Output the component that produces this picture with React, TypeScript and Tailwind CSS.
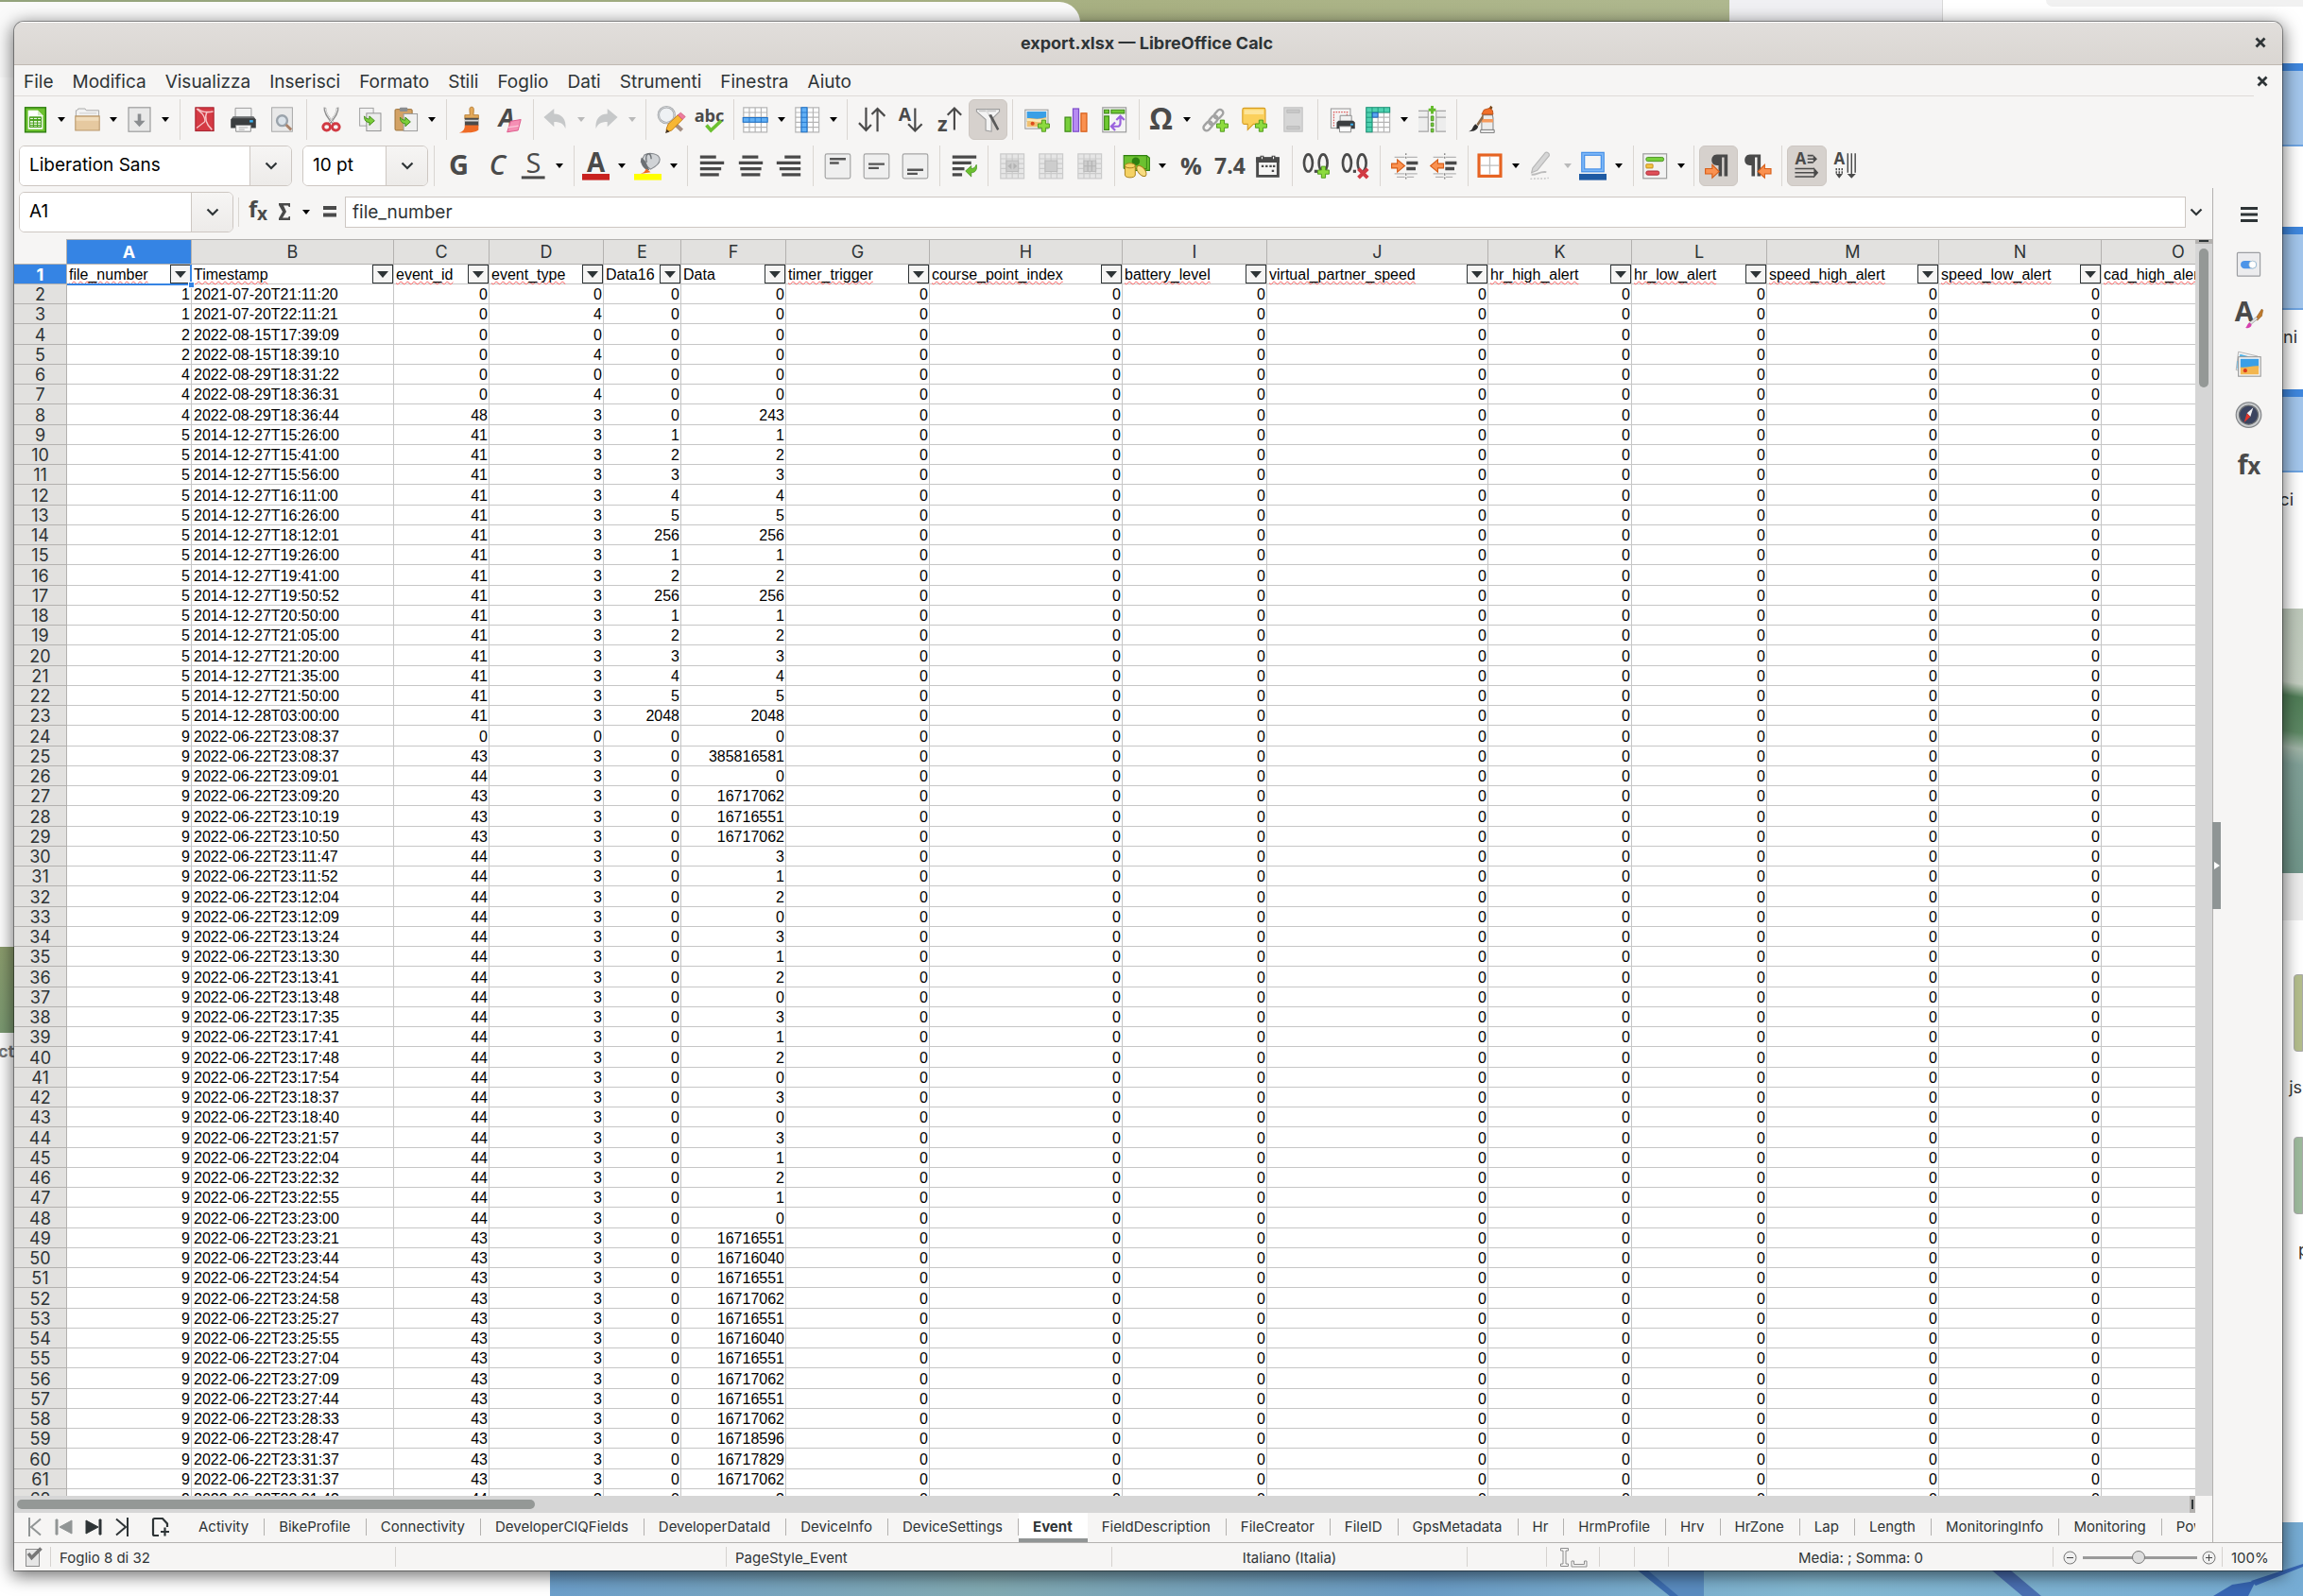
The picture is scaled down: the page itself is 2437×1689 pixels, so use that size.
import type { ReactNode } from "react";

/* ---------- data ---------- */

const columns = [
  { letter: "A", label: "file_number", width: "w-[132px]", spell: true },
  { letter: "B", label: "Timestamp", width: "w-[214px]", spell: true },
  { letter: "C", label: "event_id", width: "w-[101px]", spell: true },
  { letter: "D", label: "event_type", width: "w-[121px]", spell: true },
  { letter: "E", label: "Data16", width: "w-[82px]", spell: false },
  { letter: "F", label: "Data", width: "w-[111px]", spell: false },
  { letter: "G", label: "timer_trigger", width: "w-[152px]", spell: true },
  { letter: "H", label: "course_point_index", width: "w-[204px]", spell: true },
  { letter: "I", label: "battery_level", width: "w-[153px]", spell: true },
  { letter: "J", label: "virtual_partner_speed", width: "w-[234px]", spell: true },
  { letter: "K", label: "hr_high_alert", width: "w-[152px]", spell: true },
  { letter: "L", label: "hr_low_alert", width: "w-[143px]", spell: true },
  { letter: "M", label: "speed_high_alert", width: "w-[182px]", spell: true },
  { letter: "N", label: "speed_low_alert", width: "w-[172px]", spell: true },
  { letter: "O", label: "cad_high_alert", width: "w-[163px]", spell: true },
];

// file_number, Timestamp, event_id, event_type, Data16, Data
const events = `
1 2021-07-20T21:11:20 0 0 0 0
1 2021-07-20T22:11:21 0 4 0 0
2 2022-08-15T17:39:09 0 0 0 0
2 2022-08-15T18:39:10 0 4 0 0
4 2022-08-29T18:31:22 0 0 0 0
4 2022-08-29T18:36:31 0 4 0 0
4 2022-08-29T18:36:44 48 3 0 243
5 2014-12-27T15:26:00 41 3 1 1
5 2014-12-27T15:41:00 41 3 2 2
5 2014-12-27T15:56:00 41 3 3 3
5 2014-12-27T16:11:00 41 3 4 4
5 2014-12-27T16:26:00 41 3 5 5
5 2014-12-27T18:12:01 41 3 256 256
5 2014-12-27T19:26:00 41 3 1 1
5 2014-12-27T19:41:00 41 3 2 2
5 2014-12-27T19:50:52 41 3 256 256
5 2014-12-27T20:50:00 41 3 1 1
5 2014-12-27T21:05:00 41 3 2 2
5 2014-12-27T21:20:00 41 3 3 3
5 2014-12-27T21:35:00 41 3 4 4
5 2014-12-27T21:50:00 41 3 5 5
5 2014-12-28T03:00:00 41 3 2048 2048
9 2022-06-22T23:08:37 0 0 0 0
9 2022-06-22T23:08:37 43 3 0 385816581
9 2022-06-22T23:09:01 44 3 0 0
9 2022-06-22T23:09:20 43 3 0 16717062
9 2022-06-22T23:10:19 43 3 0 16716551
9 2022-06-22T23:10:50 43 3 0 16717062
9 2022-06-22T23:11:47 44 3 0 3
9 2022-06-22T23:11:52 44 3 0 1
9 2022-06-22T23:12:04 44 3 0 2
9 2022-06-22T23:12:09 44 3 0 0
9 2022-06-22T23:13:24 44 3 0 3
9 2022-06-22T23:13:30 44 3 0 1
9 2022-06-22T23:13:41 44 3 0 2
9 2022-06-22T23:13:48 44 3 0 0
9 2022-06-22T23:17:35 44 3 0 3
9 2022-06-22T23:17:41 44 3 0 1
9 2022-06-22T23:17:48 44 3 0 2
9 2022-06-22T23:17:54 44 3 0 0
9 2022-06-22T23:18:37 44 3 0 3
9 2022-06-22T23:18:40 44 3 0 0
9 2022-06-22T23:21:57 44 3 0 3
9 2022-06-22T23:22:04 44 3 0 1
9 2022-06-22T23:22:32 44 3 0 2
9 2022-06-22T23:22:55 44 3 0 1
9 2022-06-22T23:23:00 44 3 0 0
9 2022-06-22T23:23:21 43 3 0 16716551
9 2022-06-22T23:23:44 43 3 0 16716040
9 2022-06-22T23:24:54 43 3 0 16716551
9 2022-06-22T23:24:58 43 3 0 16717062
9 2022-06-22T23:25:27 43 3 0 16716551
9 2022-06-22T23:25:55 43 3 0 16716040
9 2022-06-22T23:27:04 43 3 0 16716551
9 2022-06-22T23:27:09 43 3 0 16717062
9 2022-06-22T23:27:44 43 3 0 16716551
9 2022-06-22T23:28:33 43 3 0 16717062
9 2022-06-22T23:28:47 43 3 0 16718596
9 2022-06-22T23:31:37 43 3 0 16717829
9 2022-06-22T23:31:37 43 3 0 16717062
9 2022-06-22T23:31:43 44 3 0 3
`
  .trim()
  .split("\n")
  .map((line) => line.split(" "));

const menus = ["File", "Modifica", "Visualizza", "Inserisci", "Formato", "Stili", "Foglio", "Dati", "Strumenti", "Finestra", "Aiuto"];

const sheets = [
  "Activity", "BikeProfile", "Connectivity", "DeveloperCIQFields", "DeveloperDataId", "DeviceInfo", "DeviceSettings",
  "Event", "FieldDescription", "FileCreator", "FileID", "GpsMetadata", "Hr", "HrmProfile", "Hrv", "HrZone", "Lap",
  "Length", "MonitoringInfo", "Monitoring", "Power",
];

/* ---------- icon helpers ---------- */

function Svg({ children }: { children: ReactNode }) {
  return (
    <svg viewBox="0 0 24 24" className="size-[29px] shrink-0 overflow-visible" fill="none">
      {children}
    </svg>
  );
}

function Glyph({ x = 12, y = 20, size = 22, fill = "#4a4a4a", italic = false, children }: { x?: number; y?: number; size?: number; fill?: string; italic?: boolean; children: ReactNode }) {
  return (
    <text x={x} y={y} fontSize={size} fill={fill} textAnchor="middle" fontWeight="700" fontStyle={italic ? "italic" : "normal"} fontFamily='"Open Sans", "Noto Sans", sans-serif'>
      {children}
    </text>
  );
}

const Plus = () => <path d="M16 12.500h3.500v3.200h3.200v3.500h-3.200v3.300H16v-3.300h-3.200v-3.500H16z" fill="#8ddb3e" stroke="#4f9a1c" strokeWidth="0.8" />;
const ArrowGreen = () => <path d="M11 12c0 4 2 5.500 4.500 5.500V20l4.500-4-4.500-4v2.500C13.500 14.500 12.500 14 11 12z" fill="#7ccf3a" stroke="#3f8a17" strokeWidth="0.8" />;

function Chevron() {
  return (
    <svg viewBox="0 0 14 14" className="size-[14px]" fill="none" stroke="#2e3436" strokeWidth="2.200">
      <path d="M1.500 4.500 7 10l5.500-5.500" />
    </svg>
  );
}

function Cross() {
  return (
    <svg viewBox="0 0 12 12" className="size-[12px]" stroke="#2e3436" strokeWidth="2.800">
      <path d="M1.500 1.500l9 9M10.500 1.500l-9 9" />
    </svg>
  );
}

/* ---------- standard toolbar icons ---------- */

const NewDoc = () => (
  <Svg>
    <rect x="3" y="1.500" width="18" height="21.500" fill="#6cc130" stroke="#2f8010" strokeWidth="1.200" />
    <path d="M5.500 4h8.500l4.500 4.500V20.500h-13z" fill="#fff" />
    <path d="M14 4v4.500h4.500z" fill="#d5eec5" />
    <path d="M7 10h10v8.500H7z" fill="#eaf6e2" stroke="#46a01a" strokeWidth="0.900" />
    <path d="M7 10h10v2H7zM7 12.800h10M7 15h10M7 17h10M10.300 10v8.500M13.700 10v8.500" stroke="#46a01a" strokeWidth="0.800" />
  </Svg>
);
const OpenFolder = () => (
  <Svg>
    <path d="M2 10V4h1l1-1.500h6L11 4h11v7z" fill="#f2f2f2" stroke="#a8a8a8" strokeWidth="0.800" />
    <path d="M5 6.500h15" stroke="#ccc" strokeWidth="0.800" />
    <path d="M1.500 9h21v12.500h-21z" fill="#e6c9a0" stroke="#b9986b" strokeWidth="0.900" />
    <path d="M2.200 10h19.600v3H2.200z" fill="#f0dcbc" />
  </Svg>
);
const Save = () => (
  <Svg>
    <rect x="2.500" y="1.500" width="19" height="21" fill="#e9e9e9" stroke="#9c9c9c" />
    <path d="M10.500 7h3v6h3.500l-5 5.500L7 13h3.500z" fill="#8a8d90" />
  </Svg>
);
const Pdf = () => (
  <Svg>
    <rect x="4" y="1.500" width="16" height="20.500" fill="#d43a44" stroke="#a41c28" strokeWidth="0.800" />
    <path d="M5 2.500l5 4.500c2 3 2.500 6 2 7L5 19.500" stroke="#f6c4c7" strokeWidth="1.100" />
    <path d="M6 2.500c3 3 8 3.500 13.500 2.500M14 5c-2 5-1 11 4.500 16" stroke="#f6c4c7" strokeWidth="1.300" />
  </Svg>
);
const Printer = () => (
  <Svg>
    <path d="M5 2h14v9H5z" fill="#f1f1f1" stroke="#9b9b9b" strokeWidth="0.800" />
    <path d="M3 9.500h18l2 2.500v7.500H1V12z" fill="#3b3e40" />
    <path d="M3 9.500h18l1 1.500H2z" fill="#6d7072" />
    <rect x="17.500" y="12.500" width="3" height="2" fill="#3bb3f3" />
    <path d="M5.500 17h13v5.500h-13z" fill="#fafafa" stroke="#8a8a8a" strokeWidth="0.800" />
    <path d="M8 19h8M8 20.800h5" stroke="#aaa" strokeWidth="0.800" />
  </Svg>
);
const Preview = () => (
  <Svg>
    <rect x="3" y="1.500" width="18" height="21" fill="#e9e9e9" stroke="#a5a5a5" strokeWidth="0.800" />
    <circle cx="12" cy="13" r="4.500" stroke="#9aa3ab" strokeWidth="2" fill="#dbe3ea" />
    <path d="M15.500 16.500l4.500 4.500" stroke="#a98168" strokeWidth="2.400" />
  </Svg>
);
const Cut = () => (
  <Svg>
    <path d="M6.500 1.500C6 5 8.500 10 14.500 16M17.500 1.500C18 5 15.500 10 9.500 16" stroke="#8f8f8f" strokeWidth="2.200" />
    <path d="M6.800 2C7 5 9 9.500 14 15M17.200 2C17 5 15 9.500 10 15" stroke="#f2f2f2" strokeWidth="0.800" />
    <ellipse cx="8" cy="18.500" rx="3.200" ry="3" stroke="#d13a43" strokeWidth="2.400" />
    <ellipse cx="16" cy="18.500" rx="3.200" ry="3" stroke="#d13a43" strokeWidth="2.400" />
  </Svg>
);
const Copy = () => (
  <Svg>
    <rect x="3" y="2" width="12" height="15.500" fill="#f2f2f2" stroke="#a0a0a0" strokeWidth="0.800" />
    <rect x="9" y="6.500" width="12.500" height="15.500" fill="#ededed" stroke="#909090" strokeWidth="0.800" />
    <g transform="translate(-4 -3)">
      <ArrowGreen />
    </g>
  </Svg>
);
const Paste = () => (
  <Svg>
    <rect x="2.500" y="3" width="15" height="18.500" rx="1" fill="#d3a265" stroke="#9a6f35" strokeWidth="0.800" />
    <rect x="6.500" y="1.500" width="7" height="3.500" rx="1" fill="#8a8d90" />
    <rect x="10" y="7" width="12" height="15" fill="#f0f0f0" stroke="#9a9a9a" strokeWidth="0.800" />
    <g transform="translate(-4 -2)">
      <ArrowGreen />
    </g>
  </Svg>
);
const Brush = () => (
  <Svg>
    <path d="M12.500 1c1.500 0 2 1 1.800 3l-.3 4h4.500v3.500h-12V8H11l-.3-4c-.2-2 .3-3 1.800-3z" fill="#e3a95a" stroke="#b3782b" strokeWidth="0.700" />
    <path d="M6.500 10.500h12v7h-12z" fill="#4a4a4a" />
    <path d="M6.500 13h12" stroke="#d8d8d8" strokeWidth="1.400" />
    <path d="M6.500 17h12v4c-3 2.500-9 2.500-17 2.500 3-1 5-2 5-6.500z" fill="#ee6b25" />
  </Svg>
);
const ClearFormat = () => (
  <Svg>
    <Glyph x={10} y={18} size={22} italic>
      A
    </Glyph>
    <path d="M13.500 13.500l9-1.500-2.500 9.500-9.500 1.500z" fill="#f58fb4" stroke="#dd5a8b" strokeWidth="0.800" />
    <path d="M11 19l9.500-1.500" stroke="#fbc7d9" strokeWidth="1" />
  </Svg>
);
const Undo = () => (
  <Svg>
    <path d="M2 10l9-7.500V7c7 0 11 5 10 13-1.500-4-4-6-10-6v4.500z" fill="#c6c8c9" />
  </Svg>
);
const Redo = () => (
  <Svg>
    <path d="M22 10l-9-7.500V7C6 7 2 12 3 20c1.500-4 4-6 10-6v4.500z" fill="#c6c8c9" />
  </Svg>
);
const Find = () => (
  <Svg>
    <circle cx="8.500" cy="8" r="7" fill="#eef1f4" stroke="#a3a6a9" strokeWidth="2" />
    <circle cx="8.500" cy="8" r="7" stroke="#dcdee0" strokeWidth="0.700" />
    <path d="M14 14l8 7.500" stroke="#a58f82" strokeWidth="3.400" />
    <path d="M8.500 20l1.500-4L18.500 8l4 4-9.500 9.500-4.500 1.500z" fill="#f7b733" stroke="#c07a12" strokeWidth="0.800" />
    <path d="M18.500 8l2.500-2 4 3.500-2.500 2.500z" fill="#ee7c9f" stroke="#c9506f" strokeWidth="0.600" />
    <path d="M7.500 24l1.200-3.500 2.500 2.200z" fill="#443322" />
  </Svg>
);
const Spelling = () => (
  <Svg>
    <Glyph y={14} size={15}>
      abc
    </Glyph>
    <path d="M9.500 17l4 4.500 9-8.500" stroke="#6cc130" strokeWidth="3" />
  </Svg>
);
// 4 x 5 sheet used by the row, column, freeze and merge icons
const gridLines = "M1.500 1.500h20.500v21.500H1.500zM1.500 5.800h20.500M1.500 10.100h20.500M1.500 14.400h20.500M1.500 18.700h20.500M6.600 1.500V23M11.700 1.500V23M16.900 1.500V23";
const RowIcon = () => (
  <Svg>
    <path d={gridLines} fill="#fff" stroke="#b5b5b5" strokeWidth="1" />
    <path d="M1 10.300h21.500v4H1z" fill="#62b0f5" stroke="#1c70c8" strokeWidth="0.900" />
    <path d="M6.600 10.300v4M11.700 10.300v4M16.900 10.300v4" stroke="#1c70c8" strokeWidth="0.700" />
  </Svg>
);
const ColIcon = () => (
  <Svg>
    <path d={gridLines} fill="#fff" stroke="#b5b5b5" strokeWidth="1" />
    <path d="M6.600 1.500h5V23h-5z" fill="#62b0f5" stroke="#1c70c8" strokeWidth="0.900" />
    <path d="M6.600 5.800h5M6.600 10.100h5M6.600 14.400h5M6.600 18.700h5" stroke="#1c70c8" strokeWidth="0.700" />
  </Svg>
);
const Sort = () => (
  <Svg>
    <path d="M7 1.500v20M.8 15l6.200 6.500 4.500-5M17 22.500v-20M12 7.500l5-5 6.500 6.500" stroke="#4a4a4a" strokeWidth="1.800" />
  </Svg>
);
const SortAsc = () => (
  <Svg>
    <Glyph x={7} y={13} size={16}>
      A
    </Glyph>
    <path d="M16 2v20M10 16l6 6 6-6" stroke="#4a4a4a" strokeWidth="1.800" />
  </Svg>
);
const SortDesc = () => (
  <Svg>
    <Glyph x={6} y={22} size={18}>
      z
    </Glyph>
    <path d="M16.500 21V2M10.500 8l6-6 6 6" stroke="#4a4a4a" strokeWidth="1.800" />
  </Svg>
);
const Filter = () => (
  <Svg>
    <path d="M2 3h20v2l-7 7v10.500l-5-1V12L2 5z" fill="#f4f4f4" stroke="#9d9d9d" strokeWidth="0.900" />
    <path d="M4 4.500h15" stroke="#c6c6c6" strokeWidth="1.200" />
    <path d="M10 3.500l3.500 5" stroke="#ddd" strokeWidth="1.400" />
    <path d="M12.500 8l7.500 13.500 1.800-1L15 7.500z" fill="#5a5a5a" />
  </Svg>
);
const ImageIcon = () => (
  <Svg>
    <rect x="1.500" y="3.500" width="20" height="16.500" fill="#f3f3f3" stroke="#9d9d9d" strokeWidth="0.900" />
    <path d="M3 5h17v9H3z" fill="#3a9fe6" />
    <path d="M3 11c4-1 8 2 17-1v8.500H3z" fill="#f0c070" />
    <path d="M3 13.500c5-1 8 2 17 0v-2.500c-6 1-12 1-17 0z" fill="#fbe9b8" />
    <circle cx="8" cy="15.500" r="1.700" fill="#dd4a1c" />
    <Plus />
  </Svg>
);
const Chart = () => (
  <Svg>
    <rect x="2.500" y="10" width="5" height="12.500" fill="#77cf3b" stroke="#3f8a17" />
    <rect x="9.500" y="2.500" width="5" height="20" fill="#b78cf2" stroke="#7d4cc9" />
    <rect x="16.500" y="6.500" width="5" height="16" fill="#fa9150" stroke="#d65c16" />
  </Svg>
);
const Pivot = () => (
  <Svg>
    <rect x="1.500" y="1.500" width="20.500" height="21.500" fill="#f4f4f4" stroke="#9d9d9d" />
    <path d="M9 3.500h11.500v3H9zM3 3.500h4v3H3zM3 9h4v12H3z" fill="#6fca33" stroke="#3f8a17" strokeWidth="0.900" />
    <path d="M9.500 18h4.500c2 0 3-1 3-3v-5M12.500 14.500L9 18l3.500 3.500M13.500 12.500L17 9l3.500 3.500" stroke="#9a62dd" strokeWidth="1.800" />
  </Svg>
);
const Omega = () => (
  <Svg>
    <Glyph y={21} size={26}>
      Ω
    </Glyph>
  </Svg>
);
const LinkIcon = () => (
  <Svg>
    <g stroke="#a2a2a2" strokeWidth="2" transform="rotate(-48 10 12)">
      <rect x="-2" y="9.500" width="9" height="5.500" rx="2.700" />
      <rect x="5" y="9.500" width="9" height="5.500" rx="2.700" />
      <rect x="12" y="9.500" width="9" height="5.500" rx="2.700" />
    </g>
    <Plus />
  </Svg>
);
const Comment = () => (
  <Svg>
    <path d="M3 2h17a1.500 1.500 0 011.500 1.500v11A1.500 1.500 0 0120 16h-9l-5 5v-5H3a1.500 1.500 0 01-1.500-1.500v-11A1.500 1.500 0 013 2z" fill="#fbd05c" stroke="#d79e22" strokeWidth="0.900" />
    <path d="M3 3.500h17v4H3z" fill="#fde59a" />
    <Plus />
  </Svg>
);
const HeaderFooter = () => (
  <Svg>
    <rect x="4" y="1.500" width="16" height="21" fill="#d6d6d6" stroke="#c2c2c2" strokeWidth="0.900" />
    <path d="M6.500 3.500h11v2.500h-11zM6.500 18h11v2.500h-11z" fill="#c9c9c9" stroke="#b5b5b5" strokeWidth="0.700" />
  </Svg>
);
const PrintArea = () => (
  <Svg>
    <rect x="2" y="2.500" width="17" height="17" fill="#f3f3f3" stroke="#9d9d9d" strokeWidth="0.900" />
    <path d="M4 5.500h13M4.500 5v13M16 5v5" stroke="#e0605f" strokeWidth="1" strokeDasharray="1.300 1" />
    <path d="M10 8.500h10v5H10z" fill="#f1f1f1" stroke="#8a8a8a" strokeWidth="0.800" />
    <path d="M8.500 13h13l1.500 1.500v5.500H7v-5.500z" fill="#3b3e40" />
    <rect x="19" y="15.500" width="2.500" height="1.600" fill="#3bb3f3" />
    <path d="M9.500 18h10v5h-10z" fill="#fafafa" stroke="#8a8a8a" strokeWidth="0.800" />
  </Svg>
);
const Freeze = () => (
  <Svg>
    <path d={gridLines} fill="#fff" stroke="#b5b5b5" strokeWidth="1" />
    <path d="M1.500 1.500h20.500v4.300H1.500zM1.500 5.800h5.100V23H1.500z" fill="#4fd1b0" stroke="#1c977a" strokeWidth="0.900" />
    <path d="M11.700 1.500v4.300M16.900 1.500v4.300M1.500 10.100h5.100M1.500 14.400h5.100M1.500 18.700h5.100M6.600 1.500v4.300" stroke="#1c977a" strokeWidth="0.800" />
    <rect x="6.800" y="6" width="4.800" height="4" fill="#5aa7f2" stroke="#1c60b8" strokeWidth="0.800" />
  </Svg>
);
const SplitWindow = () => (
  <Svg>
    <path d="M0 4h8.500v18.500H0zM15.500 4H24v18.500h-8.500z" fill="#ededed" />
    <path d="M0 4.500h8.500V23M24 4.500h-8.500V23M0 10h8.500M24 10h-8.500M0 22.500h8.500M24 22.500h-8.500" stroke="#a5a5a5" strokeWidth="1" />
    <path d="M12 0v7M8.800 3.500h6.400" stroke="#63bb2b" strokeWidth="2.400" />
    <path d="M11 9h2.200v4H11zM11 15h2.200v3H11zM11 20h2.200v3H11z" fill="#77cf3b" stroke="#3f8a17" strokeWidth="0.700" />
  </Svg>
);
const Draw = () => (
  <Svg>
    <path d="M18 3l1.500-2.500 1 1L19 4z" fill="#7a4a1c" stroke="#7a4a1c" />
    <path d="M12.500 8h8.500l.5 3v10.500h-10V11z" fill="#ececec" stroke="#8a8a8a" strokeWidth="0.900" />
    <path d="M11.500 11.500h10v3h-10z" fill="#f59a5c" />
    <path d="M13.500 3.500l5-1.500 2.500 2 .5 3.500h-10z" fill="#f2702a" stroke="#b44a10" strokeWidth="0.700" />
    <path d="M10.500 21h12v2.500h-12z" fill="#f4f4f4" stroke="#777" strokeWidth="0.800" />
    <path d="M13 7l-6 9 1.500 1.500L13 11z" fill="#8c6a4a" />
    <path d="M0 22.500c4-1 3-4 6-6.500l2.500 2c-1 3-3 4.500-8.500 4.500z" fill="#2d2d2d" />
  </Svg>
);

/* ---------- formatting toolbar icons ---------- */

const Bold = () => (
  <Svg>
    <Glyph y={20} size={24}>
      G
    </Glyph>
  </Svg>
);
const Italic = () => (
  <Svg>
    <text x="12" y="20" fontSize="24" fill="#4a4a4a" textAnchor="middle" fontWeight="600" fontStyle="italic" fontFamily='"Open Sans", sans-serif'>
      C
    </text>
  </Svg>
);
const Underline = () => (
  <Svg>
    <text x="12" y="18" fontSize="24" fill="#4a4a4a" textAnchor="middle" fontWeight="500" fontFamily='"Open Sans", sans-serif'>
      S
    </text>
    <rect x="1.500" y="21" width="20.500" height="2.500" fill="#4a4a4a" />
  </Svg>
);
const FontColor = () => (
  <Svg>
    <Glyph y={17} size={23}>
      A
    </Glyph>
    <rect x="0" y="19" width="24" height="5.500" fill="#c9211e" />
  </Svg>
);
const FillColor = () => (
  <Svg>
    <path d="M9 2.500C13 0 22 1 22.500 6.500c0 4-5 7-8 8.500L6 8.500z" fill="#d0d3d6" stroke="#85898d" strokeWidth="0.900" />
    <path d="M6.500 4.500c-2 4 1 11 7 11.500L10 8z" fill="#6c7074" />
    <path d="M11 9c-2-9 4-10 4-3" stroke="#6f7377" strokeWidth="1.200" />
    <path d="M10.500 14.500l4 3-9 1.500c3-1 4-2 5-4.500z" fill="#ee6b25" />
    <rect x="0" y="19" width="24" height="5.500" fill="#ffff00" />
  </Svg>
);
const bars = { stroke: "#4a4a4a", strokeWidth: 2.8 };
const AlignLeft = () => (
  <Svg>
    <path d="M1.500 4.200h14M1.500 9.400h21M1.500 14.600h18.500M1.500 19.800h16.500" {...bars} />
  </Svg>
);
const AlignCenter = () => (
  <Svg>
    <path d="M4.500 4.200h14M1.500 9.400h21M2.700 14.600h18.500M3.700 19.800h16.500" {...bars} />
  </Svg>
);
const AlignRight = () => (
  <Svg>
    <path d="M8.500 4.200h14M1.500 9.400h21M4 14.600h18.500M6 19.800h16.500" {...bars} />
  </Svg>
);
const VBox = ({ d }: { d: string }) => (
  <Svg>
    <rect x="1" y="1.500" width="22" height="21.500" rx="1.500" fill="#efefef" stroke="#a5a5a5" />
    <path d={d} stroke="#555" strokeWidth="1.900" />
  </Svg>
);
const Wrap = () => (
  <Svg>
    <path d="M1.500 4.200h21M1.500 9.400h16.500M1.500 14.600h10.500M1.500 19.800h8.500" {...bars} />
    <path d="M22.500 11c1 4.500-1 7-4.500 7v3.500L13 16.500l5-4.500v2.500c2 0 3.500-1 4.500-3.500z" fill="#6cc130" stroke="#3f8a17" strokeWidth="0.600" />
  </Svg>
);
const Merge = ({ children }: { children?: ReactNode }) => (
  <Svg>
    <path d={gridLines} fill="#e6e6e6" stroke="#cbcbcb" strokeWidth="1" />
    <rect x="6.600" y="7.500" width="10.500" height="9.500" fill="#cdcdcd" stroke="#bcbcbc" strokeWidth="0.900" />
    {children}
  </Svg>
);
const Currency = () => (
  <Svg>
    <path d="M1 3h20l2.500 2v11H4L1 14z" fill="#6cc130" stroke="#2f8010" strokeWidth="0.900" />
    <path d="M21 3v11.500H3" stroke="#2f8010" strokeWidth="0.700" />
    <ellipse cx="11.500" cy="8" rx="3.500" ry="3.500" fill="#2f8010" />
    <path d="M2 12c0-3 9-3 9 0v8c0 3-9 3-9 0z" fill="#f5d264" stroke="#a8801c" strokeWidth="0.800" />
    <path d="M2 12c0 2.500 9 2.500 9 0" stroke="#a8801c" strokeWidth="0.800" />
    <ellipse cx="16.500" cy="16.500" rx="3" ry="5.500" transform="rotate(-40 16.500 16.500)" fill="#f7dc80" stroke="#a8801c" strokeWidth="0.800" />
  </Svg>
);
const Percent = () => (
  <Svg>
    <Glyph y={20} size={21}>
      %
    </Glyph>
  </Svg>
);
const NumberFormat = () => (
  <Svg>
    <Glyph y={19} size={19}>
      7.4
    </Glyph>
  </Svg>
);
const DateFormat = () => (
  <Svg>
    <path d="M3 5.500h18v15.500H3z" fill="#f6f5f4" stroke="#4a4a4a" strokeWidth="2.400" />
    <path d="M1.800 4.500h20.400v4.500H1.800z" fill="#4a4a4a" />
    <path d="M7 3v3M17 3v3" stroke="#4a4a4a" strokeWidth="3.200" />
    <path d="M7 4v2M17 4v2" stroke="#f6f5f4" strokeWidth="0.900" />
    <path d="M6.500 12.300h2M10 12.300h2M13.500 12.300h2M16.500 12.300h2M15.500 16.500h2" stroke="#4a4a4a" strokeWidth="1.900" />
  </Svg>
);
const Decimals = ({ children }: { children: ReactNode }) => (
  <Svg>
    <ellipse cx="4.500" cy="9.500" rx="3.700" ry="7.500" stroke="#4a4a4a" strokeWidth="2.200" />
    <ellipse cx="17.500" cy="9.500" rx="3.700" ry="7.500" stroke="#4a4a4a" strokeWidth="2.200" />
    <rect x="9.800" y="15.500" width="2.600" height="2.600" fill="#4a4a4a" />
    {children}
  </Svg>
);
const Indent = ({ d }: { d: string }) => (
  <Svg>
    <path d="M3 4.500h9M14 4.500h9M3 19h9M14 19h9M5 21.800h7M14 21.800h6" stroke="#b5b5b5" strokeWidth="1" />
    <path d="M13 1v1.500M13 4v1.500M13 18.500v2M13 22v1.500" stroke="#8a8a8a" strokeWidth="1.200" />
    <path d="M13.500 9.500h10M13.500 14.500h8" stroke="#4a4a4a" strokeWidth="3" />
    <path d={d} fill="#fa9150" stroke="#d65c16" strokeWidth="0.900" />
  </Svg>
);
const Borders = () => (
  <Svg>
    <rect x="2.500" y="2.500" width="19" height="18.500" fill="#fff" stroke="#e66322" strokeWidth="2.600" />
    <path d="M12 4v15.500M4 11.700h16" stroke="#bdbdbd" strokeWidth="1.100" />
  </Svg>
);
const BorderStyle = () => (
  <Svg>
    <path d="M4 14L15 .5c1.500-1 4 .5 3.500 2.500L8 16l-5 2z" fill="#d6d6d6" stroke="#b8b8b8" />
    <path d="M3 19.500c4 1 7-3 13-2" stroke="#bcbcbc" strokeWidth="1.600" />
    <path d="M2 23.500c5-1 10 .5 16-1" stroke="#c5c5c5" strokeWidth="1.200" strokeDasharray="1.500 1.500" />
  </Svg>
);
const BorderColor = () => (
  <Svg>
    <rect x="3.500" y="1.500" width="17" height="14.500" fill="#f6f5f4" stroke="#3f8be6" strokeWidth="3.400" />
    <rect x="3.500" y="1.500" width="17" height="14.500" stroke="#7cb7f7" strokeWidth="1.600" />
    <rect x="0" y="19" width="24" height="5.500" fill="#1e5aa3" />
  </Svg>
);
const Conditional = () => (
  <Svg>
    <rect x="1.500" y="1.500" width="20.500" height="21.500" fill="#f2f2f2" stroke="#9d9d9d" />
    <rect x="4" y="4.500" width="15.500" height="3.500" rx="1.500" fill="#77cf3b" stroke="#3f8a17" strokeWidth="0.700" />
    <rect x="4" y="10.500" width="6" height="3.500" rx="0.500" fill="#f5c343" stroke="#b98512" strokeWidth="0.700" />
    <rect x="4" y="16.500" width="11.500" height="3.500" rx="1.500" fill="#e0505a" stroke="#a41c28" strokeWidth="0.700" />
  </Svg>
);
const Ltr = () => (
  <Svg>
    <path d="M10.500 2H20v19h-3V4.500h-2V21h-3v-9.500h-1.500C7.500 11.500 6 9.500 6 7s1.500-5 4.500-5z" fill="#4a4a4a" />
    <path d="M.5 14.500h6V11l6 6-6 5.500V19h-6z" fill="#fa9150" stroke="#d65c16" strokeWidth="0.900" />
  </Svg>
);
const Rtl = () => (
  <Svg>
    <path d="M5.500 2H15v19h-3V4.500h-2V21H7v-9.500H5.500C2.500 11.500 1 9.500 1 7s1.500-5 4.500-5z" fill="#4a4a4a" />
    <path d="M24 14.500h-5.500V11L12.500 17l6 5.500V19H24z" fill="#fa9150" stroke="#d65c16" strokeWidth="0.900" />
  </Svg>
);
const TextHoriz = () => (
  <Svg>
    <Glyph x={7} y={11} size={14}>
      A
    </Glyph>
    <path d="M13 3h5M13 6h7M13 9h5M2 14.500h17M2 18h19M2 21.500h17" stroke="#4a4a4a" strokeWidth="1.300" />
    <path d="M18 2.500l3.500 3.500-3.500 3.500zM18.500 13.500l4 4.500-4 4.500z" fill="#4a4a4a" />
  </Svg>
);
const TextVert = () => (
  <Svg>
    <Glyph x={6} y={11} size={14}>
      A
    </Glyph>
    <path d="M13.500 1v17M16.800 1v20M20 1v17" stroke="#4a4a4a" strokeWidth="1.200" />
    <path d="M3.500 14v5M6 14v7M8.500 14v5" stroke="#4a4a4a" strokeWidth="1.200" strokeDasharray="2 0.800" />
    <path d="M3 19h6l-3 4zM13 19h7.500l-3.700 4z" fill="#4a4a4a" />
  </Svg>
);

/* ---------- toolbar parts ---------- */

function Tool({ label, active = false, disabled = false, children }: { label: string; active?: boolean; disabled?: boolean; children: ReactNode }) {
  return (
    <button
      type="button"
      aria-label={label}
      disabled={disabled}
      className={`flex h-[43px] flex-1 items-center justify-center rounded-md border ${active ? "border-[#cdc7c2] bg-[#d6d1cd]" : "border-transparent"}`}
    >
      {children}
    </button>
  );
}

function DropTool({ label, disabled = false, children }: { label: string; disabled?: boolean; children: ReactNode }) {
  return (
    <button type="button" aria-label={label} disabled={disabled} className="flex h-[43px] w-[55px] shrink items-center gap-[9px] pl-[3px]">
      {children}
      <span className={`shrink-0 border-x-4 border-t-[5px] border-x-transparent ${disabled ? "border-t-[#b9b9b9]" : "border-t-black"}`} />
    </button>
  );
}

function Group({ width, last = false, children }: { width: string; last?: boolean; children: ReactNode }) {
  return <div className={`flex h-[43px] shrink-0 items-center px-[5px] ${last ? "" : "border-r border-[#dad6d2]"} ${width}`}>{children}</div>;
}

function Combo({ label, value, width }: { label: string; value: string; width: string }) {
  return (
    <div className={`flex h-[43px] shrink-0 overflow-hidden rounded-md border border-[#cdc7c2] bg-white ${width}`}>
      <input aria-label={label} defaultValue={value} className="min-w-0 flex-1 bg-white pl-[10px] text-[19px] text-black" />
      <button type="button" aria-label={`${label} elenco`} className="flex w-[44px] shrink-0 items-center justify-center border-l border-[#cdc7c2] bg-linear-to-b from-[#f6f5f4] to-[#edebe9]">
        <Chevron />
      </button>
    </div>
  );
}

function StandardToolbar() {
  return (
    <div className="flex h-[49px] shrink-0 items-center" role="toolbar" aria-label="Standard">
      <Group width="w-[176px]">
        <DropTool label="Nuovo"><NewDoc /></DropTool>
        <DropTool label="Apri"><OpenFolder /></DropTool>
        <DropTool label="Salva"><Save /></DropTool>
      </Group>
      <Group width="w-[134px]">
        <Tool label="Esporta come PDF"><Pdf /></Tool>
        <Tool label="Stampa"><Printer /></Tool>
        <Tool label="Anteprima di stampa"><Preview /></Tool>
      </Group>
      <Group width="w-[148px]">
        <Tool label="Taglia"><Cut /></Tool>
        <Tool label="Copia"><Copy /></Tool>
        <DropTool label="Incolla"><Paste /></DropTool>
      </Group>
      <Group width="w-[92px]">
        <Tool label="Clona formattazione"><Brush /></Tool>
        <Tool label="Cancella formattazione"><ClearFormat /></Tool>
      </Group>
      <Group width="w-[119px]">
        <DropTool label="Annulla" disabled><Undo /></DropTool>
        <DropTool label="Ripristina" disabled><Redo /></DropTool>
      </Group>
      <Group width="w-[93px]">
        <Tool label="Trova e sostituisci"><Find /></Tool>
        <Tool label="Controllo ortografico"><Spelling /></Tool>
      </Group>
      <Group width="w-[120px]">
        <DropTool label="Riga"><RowIcon /></DropTool>
        <DropTool label="Colonna"><ColIcon /></DropTool>
      </Group>
      <Group width="w-[175px]">
        <Tool label="Ordina"><Sort /></Tool>
        <Tool label="Ordine crescente"><SortAsc /></Tool>
        <Tool label="Ordine decrescente"><SortDesc /></Tool>
        <Tool label="Filtro automatico" active><Filter /></Tool>
      </Group>
      <Group width="w-[134px]">
        <Tool label="Inserisci immagine"><ImageIcon /></Tool>
        <Tool label="Inserisci grafico"><Chart /></Tool>
        <Tool label="Tabella pivot"><Pivot /></Tool>
      </Group>
      <Group width="w-[189px]">
        <DropTool label="Carattere speciale"><Omega /></DropTool>
        <Tool label="Collegamento"><LinkIcon /></Tool>
        <Tool label="Commento"><Comment /></Tool>
        <Tool label="Righe d'intestazione" disabled><HeaderFooter /></Tool>
      </Group>
      <Group width="w-[147px]">
        <Tool label="Area di stampa"><PrintArea /></Tool>
        <DropTool label="Blocca righe e colonne"><Freeze /></DropTool>
        <Tool label="Dividi finestra"><SplitWindow /></Tool>
      </Group>
      <Group width="w-[52px]" last>
        <Tool label="Funzioni di disegno"><Draw /></Tool>
      </Group>
    </div>
  );
}

function FormattingToolbar() {
  return (
    <div className="flex h-[48px] shrink-0 items-center pl-[5px]" role="toolbar" aria-label="Formattazione">
      <Combo label="Nome carattere" value="Liberation Sans" width="w-[289px]" />
      <div className="w-[11px] shrink-0" />
      <Combo label="Dimensione carattere" value="10 pt" width="w-[133px]" />
      <div className="h-[43px] w-[7px] shrink-0 border-r border-[#dad6d2]" />
      <Group width="w-[148px]">
        <Tool label="Grassetto"><Bold /></Tool>
        <Tool label="Corsivo"><Italic /></Tool>
        <DropTool label="Sottolineato"><Underline /></DropTool>
      </Group>
      <Group width="w-[120px]">
        <DropTool label="Colore carattere"><FontColor /></DropTool>
        <DropTool label="Colore di sfondo"><FillColor /></DropTool>
      </Group>
      <Group width="w-[133px]">
        <Tool label="Allinea a sinistra"><AlignLeft /></Tool>
        <Tool label="Centra"><AlignCenter /></Tool>
        <Tool label="Allinea a destra"><AlignRight /></Tool>
      </Group>
      <Group width="w-[134px]">
        <Tool label="Allinea in alto"><VBox d="M5 6h14M5 9.500h8" /></Tool>
        <Tool label="Centra verticalmente"><VBox d="M5 10.500h14M5 14h9" /></Tool>
        <Tool label="Allinea in basso"><VBox d="M5 15.500h14M5 19h9" /></Tool>
      </Group>
      <Group width="w-[51px]">
        <Tool label="Testo a capo"><Wrap /></Tool>
      </Group>
      <Group width="w-[134px]">
        <Tool label="Unisci e centra" disabled><Merge><path d="M11 9.500v5.500L7.800 12.200zM12.800 9.500v5.500l3.200-2.800z" fill="#b3b3b3" /></Merge></Tool>
        <Tool label="Unisci celle" disabled><Merge /></Tool>
        <Tool label="Dividi celle" disabled><Merge><path d="M10 7.500V17M13.500 7.500V17M6.600 12.200h10.500" stroke="#b3b3b3" /></Merge></Tool>
      </Group>
      <Group width="w-[188px]">
        <DropTool label="Valuta"><Currency /></DropTool>
        <Tool label="Percentuale"><Percent /></Tool>
        <Tool label="Numero"><NumberFormat /></Tool>
        <Tool label="Data"><DateFormat /></Tool>
      </Group>
      <Group width="w-[93px]">
        <Tool label="Aggiungi decimale"><Decimals><Plus /></Decimals></Tool>
        <Tool label="Elimina decimale">
          <Decimals><path d="M14.500 14.500l8 8M22.500 14.500l-8 8" stroke="#d13a43" strokeWidth="3.200" /></Decimals>
        </Tool>
      </Group>
      <Group width="w-[93px]">
        <Tool label="Aumenta rientro"><Indent d="M0.500 10h5V6.500l6.500 5.500-6.500 5.500V14h-5z" /></Tool>
        <Tool label="Riduci rientro"><Indent d="M12 10H7V6.500L0.500 12 7 17.500V14h5z" /></Tool>
      </Group>
      <Group width="w-[175px]">
        <DropTool label="Bordi"><Borders /></DropTool>
        <DropTool label="Stile bordo" disabled><BorderStyle /></DropTool>
        <DropTool label="Colore bordo"><BorderColor /></DropTool>
      </Group>
      <Group width="w-[64px]">
        <DropTool label="Formattazione condizionale"><Conditional /></DropTool>
      </Group>
      <Group width="w-[93px]">
        <Tool label="Da sinistra a destra" active><Ltr /></Tool>
        <Tool label="Da destra a sinistra"><Rtl /></Tool>
      </Group>
      <Group width="w-[93px]" last>
        <Tool label="Testo orizzontale" active><TextHoriz /></Tool>
        <Tool label="Testo verticale"><TextVert /></Tool>
      </Group>
    </div>
  );
}

function FormulaBar() {
  return (
    <div className="flex h-[54px] shrink-0 items-center pb-1 pl-[5px]">
      <Combo label="Casella nome" value="A1" width="w-[227px]" />
      <div className="h-[31px] w-[6px] shrink-0 border-r border-[#dad6d2]" />
      <button type="button" aria-label="Creazione guidata funzione" className="flex w-[41px] items-center justify-center">
        <svg viewBox="0 0 22 22" className="size-[22px] overflow-visible">
          <text x="0" y="17" fontSize="24" fontWeight="700" fill="#4a4a4a" fontFamily='"Open Sans", sans-serif'>f</text>
          <text x="9" y="20" fontSize="19" fontWeight="700" fill="#4a4a4a" fontFamily='"Open Sans", sans-serif'>x</text>
        </svg>
      </button>
      <button type="button" aria-label="Somma" className="flex w-[38px] items-center gap-[12px] pl-0">
        <svg viewBox="0 0 14 20" className="h-[20px] w-[14px] shrink-0"><path d="M1 1h12v4h-1.500c0-1-.5-1.500-1.500-1.500H6L9 10l-4 6.500h5c1 0 1.500-.5 1.500-1.500H13v4H1v-2l4-7-4-7z" fill="#4a4a4a" /></svg>
        <span className="shrink-0 border-x-4 border-t-[5px] border-x-transparent border-t-black" />
      </button>
      <button type="button" aria-label="Formula" className="flex w-[33px] items-center justify-center">
        <svg viewBox="0 0 14 12" className="h-[12px] w-[14px]"><path d="M0 0h14v4H0zM0 7.500h14v4H0z" fill="#4a4a4a" /></svg>
      </button>
      <input aria-label="Riga di immissione" defaultValue="file_number" className="h-[33px] min-w-0 flex-1 border border-[#cdc7c2] bg-white pl-[7px] text-[19px] text-[#2e3436]" />
      <button type="button" aria-label="Espandi barra di calcolo" className="mr-[10px] ml-[4px] flex w-[14px] items-center justify-center"><Chevron /></button>
    </div>
  );
}

/* ---------- sheet ---------- */

const headCell = "border-r border-b border-[#b3b1af] px-0 text-center text-[18px]";
const bodyCell = "border-r border-b border-[#c6c6c6] pb-0";

function Grid() {
  return (
    <div className="relative min-h-0 min-w-0 flex-1 overflow-hidden bg-white">
      <table className="w-[2372px] table-fixed border-separate border-spacing-0">
        <colgroup>
          <col className="w-[56px]" />
          {columns.map((c) => (
            <col key={c.letter} className={c.width} />
          ))}
        </colgroup>
        <thead>
          <tr>
            <th className="h-[27px] border-r border-b border-[#b3b1af] bg-[#f6f5f4] p-0" />
            {columns.map((c, i) => (
              <th key={c.letter} scope="col" className={`h-[27px] border-t py-0 leading-[20px] ${headCell} ${i === 0 ? "bg-[#3584e4] font-bold text-white" : "bg-[#e2e1df] font-normal text-[#2e3436]"}`}>
                {c.letter}
              </th>
            ))}
          </tr>
        </thead>
        <tbody className="font-['Liberation_Sans',Arial,sans-serif] text-[16px] leading-[18px] text-black">
          <tr>
            <th scope="row" className={`h-[21px] bg-[#3584e4] pt-[2px] pb-0 font-['Inter',sans-serif] font-bold text-white ${headCell}`}>1</th>
            {columns.map((c) => (
              <td key={c.letter} className={`h-[21px] p-0 ${bodyCell}`}>
                <div className="flex h-[20px] items-end justify-between pl-[2px]">
                  <span className={`whitespace-nowrap ${c.spell ? "underline decoration-[#ff5a5a] decoration-wavy decoration-1 underline-offset-1 [text-decoration-skip-ink:none]" : ""}`}>{c.label}</span>
                  {c.letter !== "O" && (
                    <button type="button" aria-label={`Filtra ${c.label}`} className="flex h-[20px] w-[22px] shrink-0 items-center justify-center border border-[#2e3436] bg-[#f6f5f4]">
                      <span className="border-x-[6px] border-t-[7px] border-x-transparent border-t-[#2e3436]" />
                    </button>
                  )}
                </div>
              </td>
            ))}
          </tr>
          {events.map((row, r) => {
            // rows average 21.25px, so every fourth one takes the extra pixel
            const h = r % 4 === 2 ? "h-[22px]" : "h-[21px]";
            return (
              <tr key={r}>
                <th scope="row" className={`${h} bg-[#e2e1df] pt-[2px] pb-0 font-['Inter',sans-serif] font-normal text-[#2e3436] ${headCell}`}>{r + 2}</th>
                {columns.map((c, i) => (
                  <td key={c.letter} className={`${h} pt-[2px] pr-px pl-[2px] whitespace-nowrap ${bodyCell} ${i === 1 ? "text-left" : "text-right"}`}>
                    {i < row.length ? row[i] : "0"}
                  </td>
                ))}
              </tr>
            );
          })}
        </tbody>
      </table>
      {/* cell cursor on A1 */}
      <div className="pointer-events-none absolute top-[27px] left-[56px] h-[22px] w-[132px] border-r-2 border-b-2 border-[#3584e4]" />
      <div className="pointer-events-none absolute top-[45px] left-[184px] size-[7px] border border-white bg-[#3584e4]" />
    </div>
  );
}

function SheetTabs() {
  return (
    <div className="flex h-[32px] shrink-0 border-b border-[#b3b1af] pr-[18px]">
      <div className="flex w-[180px] shrink-0 items-center gap-[11px] pb-px pl-[12px] text-[#2e3436]">
        <button type="button" aria-label="Primo foglio"><svg viewBox="0 0 20 20" className="size-[20px]" stroke="#919595" strokeWidth="2" fill="none"><path d="M4 0v20M16 1.500L6 10l10 8.500" /></svg></button>
        <button type="button" aria-label="Foglio precedente"><svg viewBox="0 0 20 20" className="size-[20px]" fill="#919595"><path d="M1 2h2v16H1zM18 3v14L5 10z" stroke="#919595" /></svg></button>
        <button type="button" aria-label="Foglio successivo"><svg viewBox="0 0 20 20" className="size-[20px]" fill="#2e3436"><path d="M16 2h2v16h-2zM2 3v14l13-7z" stroke="#2e3436" /></svg></button>
        <button type="button" aria-label="Ultimo foglio"><svg viewBox="0 0 20 20" className="size-[20px]" stroke="#2e3436" strokeWidth="2" fill="none"><path d="M15 0v20M3 1.500L13 10 3 18.500" /></svg></button>
        <button type="button" aria-label="Aggiungi foglio" className="pl-2"><svg viewBox="0 0 22 22" className="size-[22px]" stroke="#2e3436" strokeWidth="2.200" fill="none"><path d="M9 20H4.500c-1 0-1.500-.5-1.500-1.500v-15C3 2.500 3.500 2 4.500 2H13l5 5.500V11M15.500 11.500v9M11 16h9" /></svg></button>
      </div>
      <div className="flex min-w-0 flex-1 items-stretch overflow-hidden text-[15px] leading-[20px] text-[#2e3436]" role="tablist">
        {sheets.map((name) =>
          name === "Event" ? (
            <button key={name} type="button" role="tab" aria-selected="true" className="shrink-0 border-b-4 border-[#919595] bg-white pt-[2px] pr-4 pl-[15px] font-bold">
              {name}
            </button>
          ) : (
            <button key={name} type="button" role="tab" aria-selected="false" className="flex shrink-0 items-center pb-[2px]">
              <span className="pr-4 pl-[15px]">{name}</span>
              {name !== "Power" && <span className="h-[18px] w-px bg-[#b3b1af]" />}
            </button>
          ),
        )}
      </div>
    </div>
  );
}

function SidebarButton({ label, children }: { label: string; children: ReactNode }) {
  return (
    <button type="button" aria-label={label} className="flex h-[53px] w-full items-center justify-center pl-[2px]">
      {children}
    </button>
  );
}

function Sidebar() {
  return (
    <aside className="relative w-[74px] shrink-0 border-l border-b border-[#b3b1af] pt-px">
      <SidebarButton label="Impostazioni barra laterale">
        <svg viewBox="0 0 18 18" className="size-[18px]" fill="#2e3436"><path d="M0 1h18v3H0zM0 7.500h18v3H0zM0 14h18v3H0z" /></svg>
      </SidebarButton>
      <SidebarButton label="Proprietà">
        <Svg>
          <rect x="2" y="2" width="20" height="20.500" rx="0.800" fill="#ececee" stroke="#9d9fa3" />
          <rect x="5" y="9" width="14" height="7" rx="3.500" fill="#4c94e8" />
          <circle cx="15.500" cy="12.500" r="3.300" fill="#fff" stroke="#8ab" strokeWidth="0.500" />
        </Svg>
      </SidebarButton>
      <SidebarButton label="Stili">
        <Svg>
          <Glyph x={8} y={18} size={24}>A</Glyph>
          <path d="M23.500 7.500l1 1-1 5-4 4-1.500-1.500z" fill="#c07a2c" stroke="#8a5210" strokeWidth="0.500" />
          <path d="M18.500 14.500l1.500 1.500-6 5-1.500-1.500z" fill="#e3e3e3" stroke="#888" strokeWidth="0.500" />
          <path d="M9 24c2-1 1.500-4 4-4.500l1.500 1.500c0 2.500-3 3.500-5.500 3z" fill="#d63fae" />
        </Svg>
      </SidebarButton>
      <SidebarButton label="Galleria">
        <Svg>
          <path d="M3 1l17 4-3 15L1 17z" fill="#f4f4f4" stroke="#aaa" strokeWidth="0.700" />
          <path d="M4.500 3l11 3H3.800zM2 9v7l1 .3V9z" fill="#4fb3e8" />
          <rect x="3" y="5.500" width="19.500" height="17" fill="#f4f4f4" stroke="#999" strokeWidth="0.900" />
          <rect x="4.800" y="7.300" width="16" height="8" fill="#3a9fe6" />
          <path d="M4.800 14.500c5 1 10-1.500 16-1v7.300h-16z" fill="#f3b64f" />
          <circle cx="9" cy="17.500" r="1.700" fill="#dd3a1c" />
        </Svg>
      </SidebarButton>
      <SidebarButton label="Navigatore">
        <Svg>
          <circle cx="12" cy="12.500" r="11" fill="#c9cbcd" stroke="#84878a" />
          <circle cx="12" cy="12.500" r="8.300" fill="#3b4460" stroke="#6a6d70" />
          <path d="M16 6l-2.500 8-3-3z" fill="#f0f0f0" />
          <path d="M8 19l2.500-8 3 3z" fill="#e2362c" />
        </Svg>
      </SidebarButton>
      <SidebarButton label="Funzioni">
        <Svg>
          <text x="2" y="21" fontSize="24" fontWeight="700" fill="#4a4a4a" fontFamily='"Open Sans", sans-serif'>f</text>
          <text x="11" y="21" fontSize="20" fontWeight="700" fill="#4a4a4a" fontFamily='"Open Sans", sans-serif'>x</text>
        </Svg>
      </SidebarButton>
      <button type="button" aria-label="Nascondi barra laterale" className="absolute top-[671px] -left-px flex h-[92px] w-[9px] items-center justify-center bg-[#8f9595]">
        <span className="border-y-[4px] border-l-[6px] border-y-transparent border-l-white" />
      </button>
    </aside>
  );
}

const statusSep = "h-[21px] border-l border-[#d5d2cf]";

function StatusBar() {
  return (
    <div className="flex h-[29px] shrink-0 items-center text-[15px] leading-[23px] text-[#2e3436]">
      <div className="flex w-[38px] shrink-0 justify-center pl-1">
        <svg viewBox="0 0 20 22" className="h-[22px] w-[20px]" fill="none">
          <rect x="1.500" y="2.500" width="14" height="18" fill="#e6e6e6" stroke="#8d8d8d" />
          <path d="M4 7l3.500 4.500L17.500 1.500" stroke="#777" strokeWidth="3.600" />
        </svg>
      </div>
      <div className={`w-[365px] shrink-0 pl-[9px] ${statusSep}`}>Foglio 8 di 32</div>
      <div className={`w-[350px] shrink-0 ${statusSep}`} />
      <div className={`w-[408px] shrink-0 pl-[9px] ${statusSep}`}>PageStyle_Event</div>
      <div className={`w-[376px] shrink-0 text-center ${statusSep}`}>Italiano (Italia)</div>
      <div className={`w-[84px] shrink-0 ${statusSep}`} />
      <div className={`flex w-[56px] shrink-0 items-center justify-center ${statusSep}`}>
        <svg viewBox="0 0 30 22" className="h-[22px] w-[30px]" fill="#f6f5f4" stroke="#8d8d8d">
          <path d="M1.500 1.500h8v2.500h-2.500v14h2.500v2.500h-8V18H4V4H1.500zM13 15h2.500v3.500h11V15H29v6H13z" />
        </svg>
      </div>
      <div className={`w-[37px] shrink-0 ${statusSep}`} />
      <div className={`w-[36px] shrink-0 ${statusSep}`} />
      <div className={`min-w-0 flex-1 text-center ${statusSep}`}>Media: ; Somma: 0</div>
      <div className={`flex w-[179px] shrink-0 items-center justify-between pt-px pr-[6px] pl-[10px] ${statusSep}`}>
        <button type="button" aria-label="Riduci"><svg viewBox="0 0 15 15" className="size-[15px]" fill="#efefef" stroke="#777"><circle cx="7.500" cy="7.500" r="6.500" /><path d="M4 7.500h7" stroke="#444" /></svg></button>
        <input
          type="range"
          aria-label="Zoom"
          defaultValue={49}
          className="h-[15px] w-[121px] appearance-none bg-transparent [&::-webkit-slider-runnable-track]:h-[3px] [&::-webkit-slider-runnable-track]:bg-[#9a9a9a] [&::-webkit-slider-thumb]:-mt-[6px] [&::-webkit-slider-thumb]:size-[14px] [&::-webkit-slider-thumb]:appearance-none [&::-webkit-slider-thumb]:rounded-full [&::-webkit-slider-thumb]:border [&::-webkit-slider-thumb]:border-[#777] [&::-webkit-slider-thumb]:bg-[#dedede]"
        />
        <button type="button" aria-label="Aumenta"><svg viewBox="0 0 15 15" className="size-[15px]" fill="#efefef" stroke="#777"><circle cx="7.500" cy="7.500" r="6.500" /><path d="M4 7.500h7M7.500 4v7" stroke="#444" /></svg></button>
      </div>
      <div className={`w-[64px] shrink-0 pl-[9px] ${statusSep}`}>100%</div>
    </div>
  );
}

/* ---------- desktop behind the window ---------- */

function Folder({ top }: { top: string }) {
  return <div className={`absolute right-0 h-[88px] w-[40px] border-t-8 border-b-2 border-t-[#3f87de] border-b-[#6ea5e3] bg-[#a3c6ec] ${top}`} />;
}

function Desktop() {
  return (
    <div className="absolute inset-0 overflow-hidden bg-white text-[18px] leading-[22px] text-[#333]" aria-hidden="true">
      <div className="absolute inset-x-0 top-0 h-[60px] bg-linear-to-r from-[#93a37c] via-[#a9b183] to-[#b5bf9b]" />
      <div className="absolute top-[2px] left-0 h-[80px] w-[1143px] rounded-tr-[22px] bg-[#fafafa]" />
      <div className="absolute top-0 right-0 h-[80px] w-[607px] bg-[#f0f0f3]" />
      <div className="absolute top-0 right-0 h-[80px] w-[382px] border-l border-[#d8d8d8] bg-white" />
      <div className="absolute top-0 right-0 h-[7px] w-[272px] rounded-bl-lg bg-[#f1f1f1]" />
      <div className="absolute top-[1002px] left-0 h-[91px] w-[20px] bg-linear-to-b from-[#8c9d6d] to-[#7b9a72]" />
      <div className="absolute top-[1102px] -left-[2px] font-bold text-[#777]">ct</div>
      <Folder top="top-[67px]" />
      <Folder top="top-[240px]" />
      <div className="absolute top-[346px] right-[6px]">ini</div>
      <Folder top="top-[412px]" />
      <div className="absolute top-[518px] right-[10px]">ci</div>
      <div className="absolute top-[644px] right-0 h-[280px] w-[40px] bg-[linear-gradient(190deg,#bcc7b9_0%,#c3cdc0_28%,#4f7c56_33%,#5c8763_46%,#9fb3a6_52%,#7f9f96_58%,#6f9488_100%)]" />
      <div className="absolute top-[924px] right-0 h-[50px] w-[40px] bg-[#ececec]" />
      <div className="absolute top-[1031px] right-0 h-[82px] w-[10px] rounded-l-sm border border-[#aaa] bg-[#b3bd8c]" />
      <div className="absolute top-[1140px] right-px">js</div>
      <div className="absolute top-[1203px] right-0 h-[82px] w-[10px] rounded-l-sm border border-[#aaa] bg-[#9dba9c]" />
      <div className="absolute top-[1312px] -right-[6px]">p</div>
      <svg className="absolute right-0 bottom-0 h-[78px] w-[1855px]" viewBox="0 0 1855 78" preserveAspectRatio="none">
        <defs>
          <linearGradient id="sky">
            <stop offset="0" stopColor="#6c9fcb" />
            <stop offset="0.250" stopColor="#82aab2" />
            <stop offset="0.500" stopColor="#6a9cc6" />
            <stop offset="0.720" stopColor="#84b9d2" />
            <stop offset="1" stopColor="#76acd4" />
          </linearGradient>
        </defs>
        <path d="M0 40h1820V0h35v78H0z" fill="url(#sky)" />
        <path d="M1145 46l40 32h36V46z" fill="#5a8cc0" />
        <path d="M1145 46l40 32h9l-38-32z" fill="#3d6db0" />
        <path d="M1520 46l38 32h20l-38-32z" fill="#4a6fb2" />
        <path d="M1760 78l20-12 25-4-8 16zM1800 62l55-18v3l-50 20z" fill="#3766b4" />
      </svg>
    </div>
  );
}

export default function App() {
  return (
    <div className="relative flex h-screen overflow-hidden pt-[23px] pr-[22px] pb-[27px] pl-[15px] font-['Inter',sans-serif]">
      <Desktop />
      <main className="relative flex min-w-0 flex-1 flex-col overflow-hidden rounded-t-[10px] bg-[#f6f5f4] shadow-[0_0_0_1px_rgba(0,0,0,0.35),0_4px_18px_2px_rgba(0,0,0,0.55)]">
        <header className="flex h-[46px] shrink-0 items-center border-t border-b border-t-white border-b-[#bfb8b1] bg-linear-to-b from-[#e1dedb] to-[#dad6d2] pr-[17px] pb-[2px] pl-[26px]">
          <h1 className="flex-1 text-center text-[18px] font-bold text-[#2e3436]">export.xlsx — LibreOffice Calc</h1>
          <button type="button" aria-label="Chiudi"><Cross /></button>
        </header>
        <nav className="flex h-[33px] shrink-0 items-center pr-[15px]">
          <ul className="flex h-full flex-1 items-center border-b border-[#dedbd8] pt-[3px] text-[19px] leading-[22px] text-[#2e3436]">
            {menus.map((m) => (
              <li key={m}>
                <button type="button" className="px-[10px]">{m}</button>
              </li>
            ))}
          </ul>
          <button type="button" aria-label="Chiudi documento" className="ml-[3px]"><Cross /></button>
        </nav>
        <StandardToolbar />
        <FormattingToolbar />
        <div className="flex min-h-0 flex-1">
          <div className="flex min-w-0 flex-1 flex-col">
            <FormulaBar />
            <div className="flex min-h-0 flex-1">
              <Grid />
              <div className="flex w-[18px] shrink-0 flex-col items-center bg-[#d6d6d6]">
                <div className="flex h-[5px] w-full justify-center bg-[#b3b1af]"><span className="mt-px h-[2px] w-[10px] bg-[#2e3436]" /></div>
                <div className="mt-[5px] h-[147px] w-[10px] rounded-full bg-[#949896]" />
              </div>
            </div>
            <div className="flex h-[18px] shrink-0 pr-[18px]">
              <div className="flex flex-1 items-center bg-[#d6d6d6] pl-[3px]">
                <div className="h-[10px] w-[548px] rounded-full bg-[#949896]" />
              </div>
              <div className="flex w-[6px] items-center justify-center bg-[#b3b1af]"><span className="h-[10px] w-[2px] bg-[#2e3436]" /></div>
            </div>
            <SheetTabs />
          </div>
          <Sidebar />
        </div>
        <StatusBar />
      </main>
    </div>
  );
}
